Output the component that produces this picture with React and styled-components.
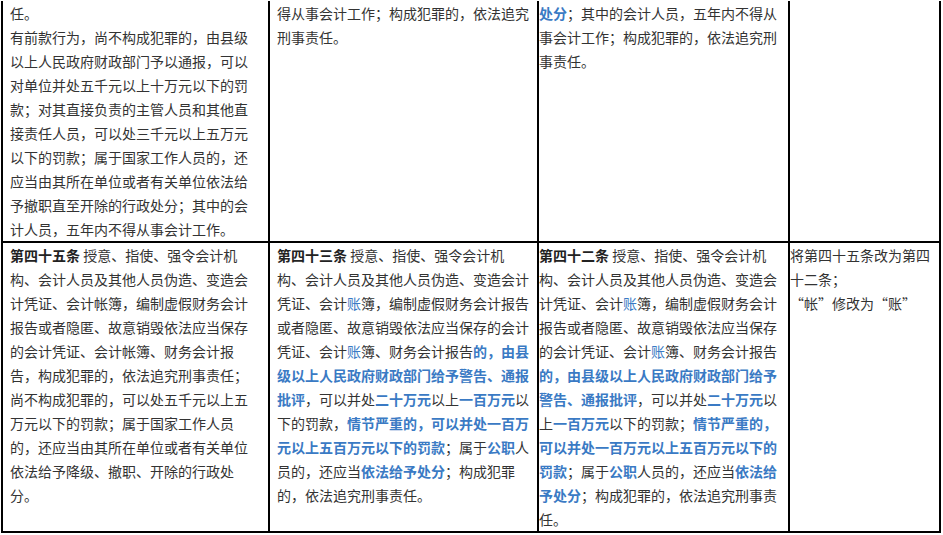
import React from 'react';
import styled, { createGlobalStyle } from 'styled-components';

const GlobalStyle = createGlobalStyle`
  html, body {
    margin: 0;
    padding: 0;
    background: #fff;
  }
  body {
    font-family: "Noto Sans CJK SC", "Noto Sans", sans-serif;
  }
`;

const Table = styled.table`
  margin: 1px 0 0 1px;
  width: 940px;
  table-layout: fixed;
  border-collapse: separate;
  border-spacing: 0;
  font-size: 14px;
  line-height: 24px;
  color: #333;
`;

const Cell = styled.td`
  vertical-align: top;
  padding: 0 ${(p) => p.$pr || 0}px 0 ${(p) => p.$pl || 0}px;
  border-right: 2px solid #000;
  border-bottom: 2px solid #000;
  border-left: ${(p) => (p.$first ? '2px solid #000' : 'none')};
`;

const P = styled.p`
  margin: 0;
`;

const Title = styled.strong`
  font-weight: 700;
  color: #222;
`;

const Hl = styled.span`
  color: #3a7ac4;
  font-weight: ${(p) => (p.$bold ? 700 : 400)};
`;

const App = () => {
  return (
    <>
      <GlobalStyle />
      <Table>
        <colgroup>
          <col style={{ width: 269 }} />
          <col style={{ width: 269 }} />
          <col style={{ width: 251 }} />
          <col style={{ width: 151 }} />
        </colgroup>
        <tbody>
          <tr>
            <Cell $first $pl={7} $pr={13}>
              <P>任。</P>
              <P>
                有前款行为，尚不构成犯罪的，由县级以上人民政府财政部门予以通报，可以对单位并处五千元以上十万元以下的罚款；对其直接负责的主管人员和其他直接责任人员，可以处三千元以上五万元以下的罚款；属于国家工作人员的，还应当由其所在单位或者有关单位依法给予撤职直至开除的行政处分；其中的会计人员，五年内不得从事会计工作。
              </P>
            </Cell>
            <Cell $pl={7} $pr={7}>
              <P>得从事会计工作；构成犯罪的，依法追究刑事责任。</P>
            </Cell>
            <Cell>
              <P>
                <Hl $bold>处分</Hl>；其中的会计人员，五年内不得从事会计工作；构成犯罪的，依法追究刑事责任。
              </P>
            </Cell>
            <Cell />
          </tr>
          <tr>
            <Cell $first $pl={7} $pr={13}>
              <P>
                <Title>第四十五条</Title> 授意、指使、强令会计机构、会计人员及其他人员伪造、变造会计凭证、会计帐簿，编制虚假财务会计报告或者隐匿、故意销毁依法应当保存的会计凭证、会计帐簿、财务会计报告，构成犯罪的，依法追究刑事责任；尚不构成犯罪的，可以处五千元以上五万元以下的罚款；属于国家工作人员的，还应当由其所在单位或者有关单位依法给予降级、撤职、开除的行政处分。
              </P>
            </Cell>
            <Cell $pl={7} $pr={7}>
              <P>
                <Title>第四十三条</Title> 授意、指使、强令会计机构、会计人员及其他人员伪造、变造会计凭证、会计<Hl>账</Hl>簿，编制虚假财务会计报告或者隐匿、故意销毁依法应当保存的会计凭证、会计<Hl>账</Hl>簿、财务会计报告
                <Hl $bold>的，由县级以上人民政府财政部门给予警告、通报批评</Hl>，可以并处<Hl $bold>二十万元</Hl>以上<Hl $bold>一百万元</Hl>以下的罚款，
                <Hl $bold>情节严重的，可以并处一百万元以上五百万元以下的罚款</Hl>；属于<Hl $bold>公职</Hl>人员的，还应当<Hl $bold>依法给予处分</Hl>；构成犯罪的，依法追究刑事责任。
              </P>
            </Cell>
            <Cell>
              <P>
                <Title>第四十二条</Title> 授意、指使、强令会计机构、会计人员及其他人员伪造、变造会计凭证、会计<Hl>账</Hl>簿，编制虚假财务会计报告或者隐匿、故意销毁依法应当保存的会计凭证、会计<Hl>账</Hl>簿、财务会计报告
                <Hl $bold>的，由县级以上人民政府财政部门给予警告、通报批评</Hl>，可以并处<Hl $bold>二十万元</Hl>以上<Hl $bold>一百万元</Hl>以下的罚款；
                <Hl $bold>情节严重的，可以并处一百万元以上五百万元以下的罚款</Hl>；属于<Hl $bold>公职</Hl>人员的，还应当<Hl $bold>依法给予处分</Hl>；构成犯罪的，依法追究刑事责任。
              </P>
            </Cell>
            <Cell>
              <P>将第四十五条改为第四十二条；</P>
              <P>“帐”修改为“账”</P>
            </Cell>
          </tr>
        </tbody>
      </Table>
    </>
  );
};

export default App;
